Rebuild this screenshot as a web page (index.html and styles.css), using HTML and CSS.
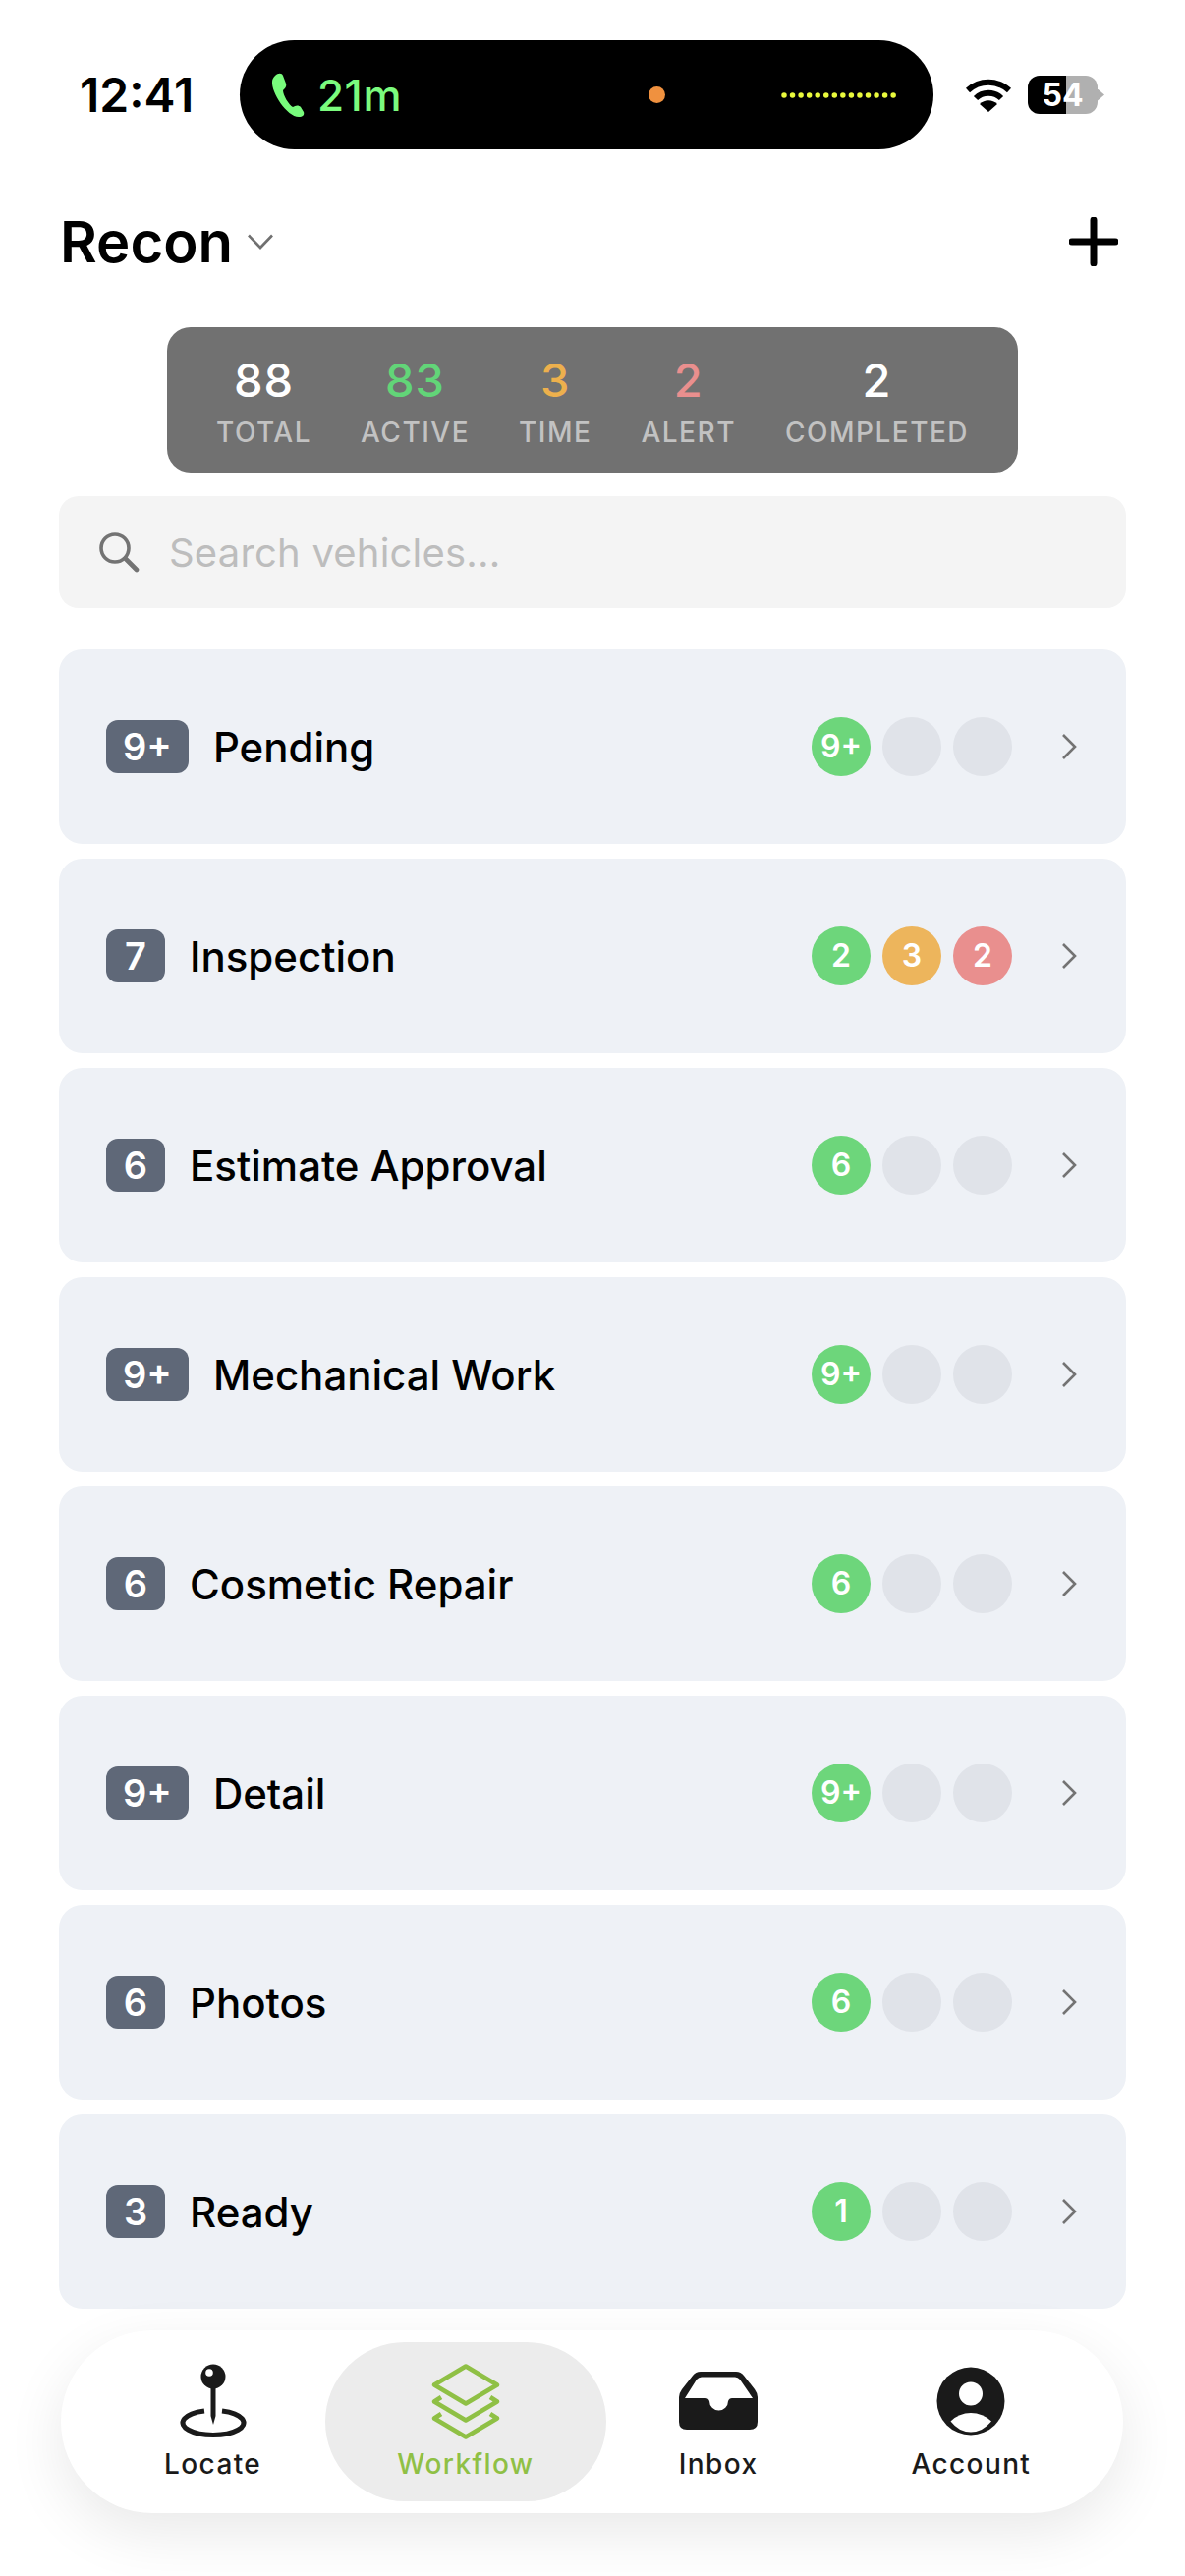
FILE: index.html
```html
<!DOCTYPE html>
<html lang="en">

<head>
    <meta charset="UTF-8">
    <meta name="viewport" content="width=device-width, initial-scale=1.0">
    <title>Recon</title>

    <link rel="stylesheet" href="styles.css">
</head>

<body>

    <div id="app">

        <!-- Status bar -->
        <div class="status-bar">
            <span class="clock">12:41</span>
            <div class="island">
                <svg class="phone-icon" viewBox="0 0 34 46" width="34" height="46">
                    <path fill="#78fb7c" d="M4 3 C7 0 11 0 12 3 L15 11 C16 14 14 16 12 18 C12 23 18 33 22 35 C25 33 28 33 30 35 L33 40 C34 43 32 45 28 45 C16 45 0 20 1 9 C1 7 2 5 4 3 Z" />
                </svg>
                <span class="call-time">21m</span>
                <span class="mic-dot"></span>
                <svg class="wave" viewBox="0 0 118 6" width="118" height="6">
                    <line x1="3" y1="3" x2="115" y2="3" stroke="#e9f93c" stroke-width="5.5" stroke-linecap="round" stroke-dasharray="0 8.55" />
                </svg>
            </div>
            <div class="status-icons">
                <svg viewBox="0 0 48 36" width="48" height="36">
                    <path fill="none" stroke="#000" stroke-width="6" d="M3 13 C15 2 33 2 45 13" />
                    <path fill="none" stroke="#000" stroke-width="6" d="M11 21 C18 14 30 14 37 21" />
                    <path fill="#000" d="M24 35 L15 27 C20 22 28 22 33 27 Z" />
                </svg>
                <div class="battery">
                    <span class="battery-level">54</span>
                </div>
                <span class="battery-nub"></span>
            </div>
        </div>

        <!-- Title -->
        <div class="page-header">
            <div class="title-group">
                <h1>Recon</h1>
                <svg viewBox="0 0 26 16" width="26" height="16">
                    <path fill="none" stroke="#707070" stroke-width="2.6" d="M1 1.5 L13 14 L25 1.5" />
                </svg>
            </div>
            <svg viewBox="0 0 50 50" width="50" height="50">
                <path fill="none" stroke="#000" stroke-width="7" stroke-linecap="round" d="M25 3 V47 M3 25 H47" />
            </svg>
        </div>

        <!-- Counts -->
        <div class="stats">
            <div class="stat"><span class="stat-num">88</span><span class="stat-label">TOTAL</span></div>
            <div class="stat"><span class="stat-num green">83</span><span class="stat-label">ACTIVE</span></div>
            <div class="stat"><span class="stat-num orange">3</span><span class="stat-label">TIME</span></div>
            <div class="stat"><span class="stat-num red">2</span><span class="stat-label">ALERT</span></div>
            <div class="stat"><span class="stat-num">2</span><span class="stat-label">COMPLETED</span></div>
        </div>

        <!-- Search -->
        <div class="search">
            <svg viewBox="0 0 42 42" width="42" height="42">
                <circle cx="17" cy="17" r="14" fill="none" stroke="#737373" stroke-width="3.6" />
                <path fill="none" stroke="#737373" stroke-width="4.6" stroke-linecap="round" d="M28 28 L39 39" />
            </svg>
            <span class="search-text">Search vehicles...</span>
        </div>

        <!-- Workflow steps -->
        <div class="steps">
            <div class="step">
                <span class="badge">9+</span>
                <span class="step-name">Pending</span>
                <div class="dots"><span class="dot green-bg">9+</span><span class="dot"></span><span class="dot"></span></div>
                <svg class="chevron" viewBox="0 0 16 28" width="16" height="28"><path d="M2 2 L14 14 L2 26" /></svg>
            </div>
            <div class="step">
                <span class="badge">7</span>
                <span class="step-name">Inspection</span>
                <div class="dots"><span class="dot green-bg">2</span><span class="dot orange-bg">3</span><span class="dot red-bg">2</span></div>
                <svg class="chevron" viewBox="0 0 16 28" width="16" height="28"><path d="M2 2 L14 14 L2 26" /></svg>
            </div>
            <div class="step">
                <span class="badge">6</span>
                <span class="step-name">Estimate Approval</span>
                <div class="dots"><span class="dot green-bg">6</span><span class="dot"></span><span class="dot"></span></div>
                <svg class="chevron" viewBox="0 0 16 28" width="16" height="28"><path d="M2 2 L14 14 L2 26" /></svg>
            </div>
            <div class="step">
                <span class="badge">9+</span>
                <span class="step-name">Mechanical Work</span>
                <div class="dots"><span class="dot green-bg">9+</span><span class="dot"></span><span class="dot"></span></div>
                <svg class="chevron" viewBox="0 0 16 28" width="16" height="28"><path d="M2 2 L14 14 L2 26" /></svg>
            </div>
            <div class="step">
                <span class="badge">6</span>
                <span class="step-name">Cosmetic Repair</span>
                <div class="dots"><span class="dot green-bg">6</span><span class="dot"></span><span class="dot"></span></div>
                <svg class="chevron" viewBox="0 0 16 28" width="16" height="28"><path d="M2 2 L14 14 L2 26" /></svg>
            </div>
            <div class="step">
                <span class="badge">9+</span>
                <span class="step-name">Detail</span>
                <div class="dots"><span class="dot green-bg">9+</span><span class="dot"></span><span class="dot"></span></div>
                <svg class="chevron" viewBox="0 0 16 28" width="16" height="28"><path d="M2 2 L14 14 L2 26" /></svg>
            </div>
            <div class="step">
                <span class="badge">6</span>
                <span class="step-name">Photos</span>
                <div class="dots"><span class="dot green-bg">6</span><span class="dot"></span><span class="dot"></span></div>
                <svg class="chevron" viewBox="0 0 16 28" width="16" height="28"><path d="M2 2 L14 14 L2 26" /></svg>
            </div>
            <div class="step">
                <span class="badge">3</span>
                <span class="step-name">Ready</span>
                <div class="dots"><span class="dot green-bg">1</span><span class="dot"></span><span class="dot"></span></div>
                <svg class="chevron" viewBox="0 0 16 28" width="16" height="28"><path d="M2 2 L14 14 L2 26" /></svg>
            </div>
        </div>

        <!-- Bottom navigation -->
        <div class="footer">
            <nav class="tab-bar">
                <div class="tab">
                    <svg viewBox="0 0 80 80" width="80" height="80">
                        <path fill="none" stroke="#1a1a1a" stroke-width="5" d="M31 50 A31 12.5 0 1 0 49 50" />
                        <path fill="#1a1a1a" d="M37.5 24 H42.5 V55 L40 64 L37.5 55 Z" />
                        <circle cx="40" cy="15" r="12.5" fill="#1a1a1a" />
                        <circle cx="36" cy="11" r="3.8" fill="#fff" />
                    </svg>
                    <span>Locate</span>
                </div>
                <div class="tab active">
                    <svg viewBox="0 0 80 80" width="80" height="80">
                        <g fill="none" stroke="#8fc045" stroke-width="4.6" stroke-linejoin="round">
                            <path d="M40 4.5 L72 23.5 L40 42.5 L8 23.5 Z" />
                            <path d="M15 36 L8 40.5 L40 59.5 L72 40.5 L65 36" />
                            <path d="M15 53 L8 57.5 L40 76.5 L72 57.5 L65 53" />
                        </g>
                    </svg>
                    <span>Workflow</span>
                </div>
                <div class="tab">
                    <svg viewBox="0 0 80 80" width="80" height="80">
                        <path fill="#1a1a1a" fill-rule="evenodd" d="M22 10 H58 Q63 10 66 14 L77 28 Q80 32 80 36 V61 Q80 69 72 69 H8 Q0 69 0 61 V36 Q0 32 3 28 L14 14 Q17 10 22 10 Z M23 15.5 H57 Q60 15.5 62 18 L75 37 H54 Q51 37 50 40 A9.5 9.5 0 0 1 31 40 Q30 37 27 37 H6 L18 18 Q20 15.5 23 15.5 Z" />
                    </svg>
                    <span>Inbox</span>
                </div>
                <div class="tab">
                    <svg viewBox="0 0 80 80" width="80" height="80">
                        <circle cx="40" cy="40" r="34.5" fill="#1a1a1a" />
                        <circle cx="40" cy="32.5" r="12" fill="#fff" />
                        <path fill="#fff" d="M19.5 60.5 Q28 52 40 52 Q52 52 61 60.5 Q52 71.5 40 71.5 Q28 71.5 19.5 60.5 Z" />
                    </svg>
                    <span>Account</span>
                </div>
            </nav>
        </div>
    </div>

</body>

</html>
```

FILE: styles.css
```css
* {
    box-sizing: border-box;
}

body {
    margin: 0;
    background-color: #fff;
    font-family: Inter, "Liberation Sans", sans-serif;
    color: #000;
}

#app {
    width: 1206px;
    height: 2622px;
    overflow: hidden;
    display: flex;
    flex-direction: column;
}

/* Status bar */
.status-bar {
    display: flex;
    align-items: center;
    height: 111px;
    margin-top: 41px;
    padding-left: 81px;
}

.clock {
    width: 163px;
    font-size: 48px;
    font-weight: 600;
}

.island {
    display: flex;
    align-items: center;
    width: 706px;
    height: 111px;
    padding-left: 32px;
    background-color: #000;
    border-radius: 56px;
}

.call-time {
    width: 87px;
    margin-left: 13px;
    font-size: 44px;
    font-weight: 500;
    letter-spacing: 0.5px;
    color: #7bfb7e;
}

.mic-dot {
    width: 17px;
    height: 17px;
    margin-left: 250px;
    border-radius: 50%;
    background-color: #f0913f;
}

.wave {
    margin-left: 118px;
}

.status-icons {
    display: flex;
    align-items: center;
    margin-left: 32px;
}

.battery {
    width: 71px;
    height: 39px;
    margin-left: 16px;
    border-radius: 12px;
    background: linear-gradient(to right, #000 55%, #b0b0b0 55%);
    text-align: center;
}

.battery-level {
    font-size: 32px;
    font-weight: 700;
    line-height: 39px;
    color: #fff;
}

.battery-nub {
    width: 7px;
    height: 12px;
    background-color: #b0b0b0;
    clip-path: polygon(0 0, 100% 50%, 0 100%);
}

/* Title */
.page-header {
    display: flex;
    justify-content: space-between;
    align-items: center;
    height: 92px;
    margin-top: 48px;
    padding: 0 68px 0 61px;
}

.title-group {
    display: flex;
    align-items: center;
    gap: 15px;
}

h1 {
    margin: 0;
    font-size: 58px;
    font-weight: 600;
}

/* Counts */
.stats {
    align-self: center;
    display: flex;
    gap: 50px;
    height: 148px;
    margin-top: 41px;
    padding: 24px 50px 0;
    background-color: #717171;
    border-radius: 24px;
}

.stat {
    display: flex;
    flex-direction: column;
    align-items: center;
}

.stat-num {
    font-size: 47px;
    font-weight: 500;
    line-height: 60px;
    letter-spacing: 1px;
    color: #fff;
}

.stat-label {
    margin-top: 5px;
    font-size: 28px;
    font-weight: 500;
    line-height: 36px;
    letter-spacing: 1.5px;
    color: #c2c2c2;
}

.green {
    color: #62d578;
}

.orange {
    color: #edb04d;
}

.red {
    color: #e98f8e;
}

/* Search */
.search {
    display: flex;
    align-items: center;
    gap: 30px;
    height: 114px;
    margin: 24px 60px 0;
    padding-left: 40px;
    background-color: #f4f4f4;
    border-radius: 20px;
}

.search-text {
    font-size: 40px;
    letter-spacing: 0.2px;
    color: #bdbdbd;
}

/* Workflow steps */
.steps {
    display: flex;
    flex-direction: column;
    gap: 15px;
    margin: 42px 60px 0;
}

.step {
    display: flex;
    align-items: center;
    height: 198px;
    padding: 0 50px 0 48px;
    background-color: #eef1f6;
    border-radius: 24px;
}

.badge {
    min-width: 60px;
    height: 54px;
    padding: 0 17px;
    border-radius: 12px;
    background-color: #5f6878;
    color: #fff;
    font-size: 38px;
    font-weight: 600;
    line-height: 54px;
    text-align: center;
}

.step-name {
    flex: 1;
    margin-left: 25px;
    font-size: 42px;
    font-weight: 500;
}

.dots {
    display: flex;
    gap: 12px;
}

.dot {
    width: 60px;
    height: 60px;
    border-radius: 50%;
    background-color: #e0e3e9;
    color: #fff;
    font-size: 32px;
    font-weight: 600;
    line-height: 60px;
    text-align: center;
}

.green-bg {
    background-color: #6dd67b;
}

.orange-bg {
    background-color: #edb55c;
}

.red-bg {
    background-color: #e98f8e;
}

.chevron {
    margin-left: 50px;
}

.chevron path {
    fill: none;
    stroke: #737373;
    stroke-width: 2.6;
}

/* Bottom navigation */
.footer {
    flex: 1;
    padding: 22px 63px 0 62px;
}

.tab-bar {
    display: grid;
    grid-template-columns: repeat(4, 1fr);
    height: 186px;
    padding: 12px 26px;
    background-color: #fff;
    border-radius: 93px;
    box-shadow: 0 20px 60px rgba(0, 0, 0, 0.09);
}

.tab {
    display: flex;
    flex-direction: column;
    align-items: center;
    padding-top: 20px;
    font-size: 28px;
    font-weight: 500;
    letter-spacing: 1.4px;
    color: #1a1a1a;
}

.tab span {
    margin-top: 7px;
}

.tab.active {
    margin: 0 -14px;
    background-color: #ececec;
    border-radius: 81px;
    color: #8fc045;
}
```
